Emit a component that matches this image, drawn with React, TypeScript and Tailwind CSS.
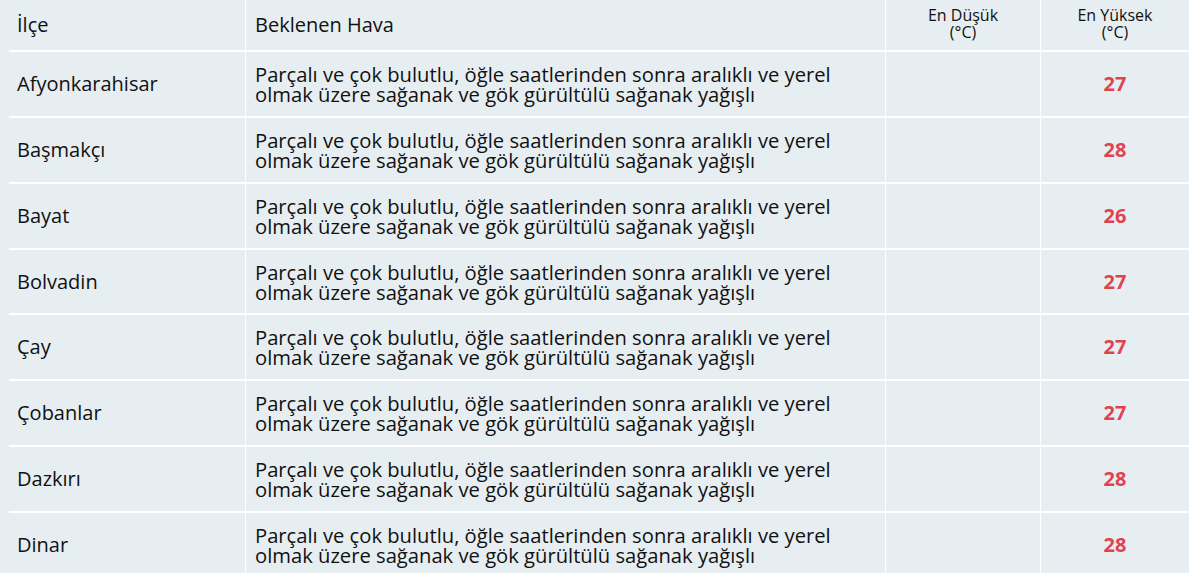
const rows = [
  { ilce: 'Afyonkarahisar', max: 27 },
  { ilce: 'Başmakçı', max: 28 },
  { ilce: 'Bayat', max: 26 },
  { ilce: 'Bolvadin', max: 27 },
  { ilce: 'Çay', max: 27 },
  { ilce: 'Çobanlar', max: 27 },
  { ilce: 'Dazkırı', max: 28 },
  { ilce: 'Dinar', max: 28 },
];

const hava =
  'Parçalı ve çok bulutlu, öğle saatlerinden sonra aralıklı ve yerel olmak üzere sağanak ve gök gürültülü sağanak yağışlı';

export default function App() {
  return (
    <div
      className="w-[1190px] h-[573px] overflow-hidden bg-[#e7eef2] pl-[9px] text-[#111]"
      style={{ fontFamily: '"Open Sans", sans-serif' }}
    >
      <div className="w-[1181px]">
        <div className="flex h-[52px] border-b-2 border-white">
          <div className="w-[237px] border-r border-white pl-[8px] flex items-center text-[20px]">İlçe</div>
          <div className="w-[640px] border-r border-white pl-[9px] flex items-center text-[20px]">Beklenen Hava</div>
          <div className="w-[155px] border-r border-white flex flex-col items-center pt-[7px] text-[16px] leading-[17px]">
            <span>En Düşük</span>
            <span>(°C)</span>
          </div>
          <div className="w-[149px] border-r border-white flex flex-col items-center pt-[7px] text-[16px] leading-[17px]">
            <span>En Yüksek</span>
            <span>(°C)</span>
          </div>
        </div>
        {rows.map((r) => (
          <div key={r.ilce} className="flex h-[65.86px] border-b-2 border-white">
            <div className="w-[237px] border-r border-white pl-[8px] flex items-center text-[20px]">{r.ilce}</div>
            <div className="w-[640px] border-r border-white pl-[9px] pr-[8px] flex items-center text-[20.2px] leading-[20px]">
              {hava}
            </div>
            <div className="w-[155px] border-r border-white" />
            <div className="w-[149px] border-r border-white flex items-center justify-center text-[20px] font-bold text-[#e0434f]">
              {r.max}
            </div>
          </div>
        ))}
      </div>
    </div>
  );
}
